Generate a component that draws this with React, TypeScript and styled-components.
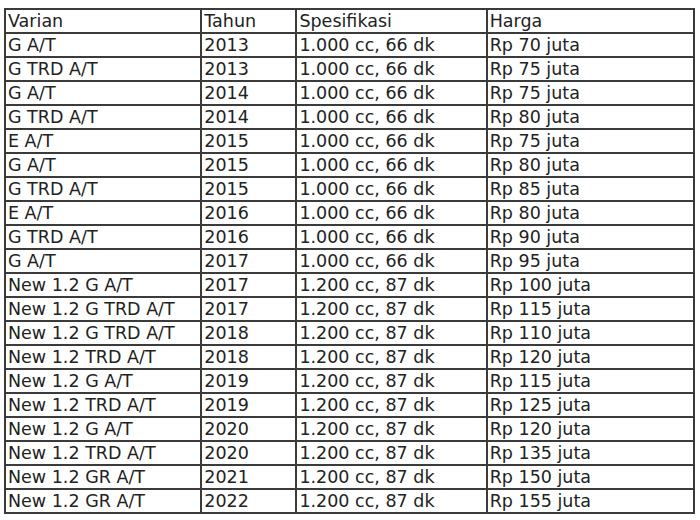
import React from "react";
import styled, { createGlobalStyle } from "styled-components";

const GlobalStyle = createGlobalStyle`
  html, body {
    margin: 0;
    padding: 0;
    background: #ffffff;
  }
  body {
    font-family: "DejaVu Sans", Verdana, sans-serif;
  }
`;

const rows: [string, string, string, string][] = [
  ["G A/T", "2013", "1.000 cc, 66 dk", "Rp 70 juta"],
  ["G TRD A/T", "2013", "1.000 cc, 66 dk", "Rp 75 juta"],
  ["G A/T", "2014", "1.000 cc, 66 dk", "Rp 75 juta"],
  ["G TRD A/T", "2014", "1.000 cc, 66 dk", "Rp 80 juta"],
  ["E A/T", "2015", "1.000 cc, 66 dk", "Rp 75 juta"],
  ["G A/T", "2015", "1.000 cc, 66 dk", "Rp 80 juta"],
  ["G TRD A/T", "2015", "1.000 cc, 66 dk", "Rp 85 juta"],
  ["E A/T", "2016", "1.000 cc, 66 dk", "Rp 80 juta"],
  ["G TRD A/T", "2016", "1.000 cc, 66 dk", "Rp 90 juta"],
  ["G A/T", "2017", "1.000 cc, 66 dk", "Rp 95 juta"],
  ["New 1.2 G A/T", "2017", "1.200 cc, 87 dk", "Rp 100 juta"],
  ["New 1.2 G TRD A/T", "2017", "1.200 cc, 87 dk", "Rp 115 juta"],
  ["New 1.2 G TRD A/T", "2018", "1.200 cc, 87 dk", "Rp 110 juta"],
  ["New 1.2 TRD A/T", "2018", "1.200 cc, 87 dk", "Rp 120 juta"],
  ["New 1.2 G A/T", "2019", "1.200 cc, 87 dk", "Rp 115 juta"],
  ["New 1.2 TRD A/T", "2019", "1.200 cc, 87 dk", "Rp 125 juta"],
  ["New 1.2 G A/T", "2020", "1.200 cc, 87 dk", "Rp 120 juta"],
  ["New 1.2 TRD A/T", "2020", "1.200 cc, 87 dk", "Rp 135 juta"],
  ["New 1.2 GR A/T", "2021", "1.200 cc, 87 dk", "Rp 150 juta"],
  ["New 1.2 GR A/T", "2022", "1.200 cc, 87 dk", "Rp 155 juta"],
];

const headers = ["Varian", "Tahun", "Spesifikasi", "Harga"];
const colWidths = [196, 95, 190, 207];

const Page = styled.div`
  padding: 8px 0 0 4px;
`;

const PriceTable = styled.table`
  border-collapse: collapse;
  table-layout: fixed;
  width: 691px;
  border: 2px solid #3b3b3b;
  color: #222222;
`;

const Row = styled.tr`
  height: 24px;
`;

const Cell = styled.td`
  border: 2px solid #3b3b3b;
  padding: 0 2px;
  font-size: 17.5px;
  line-height: 20px;
  font-weight: normal;
  text-align: left;
  vertical-align: middle;
  white-space: nowrap;
  overflow: hidden;
`;

export default function App() {
  return (
    <Page>
      <GlobalStyle />
      <PriceTable>
        <colgroup>
          {colWidths.map((w, i) => (
            <col key={i} style={{ width: w }} />
          ))}
        </colgroup>
        <tbody>
          <Row>
            {headers.map((h) => (
              <Cell key={h}>{h}</Cell>
            ))}
          </Row>
          {rows.map((r, i) => (
            <Row key={i}>
              {r.map((c, j) => (
                <Cell key={j}>{c}</Cell>
              ))}
            </Row>
          ))}
        </tbody>
      </PriceTable>
    </Page>
  );
}
